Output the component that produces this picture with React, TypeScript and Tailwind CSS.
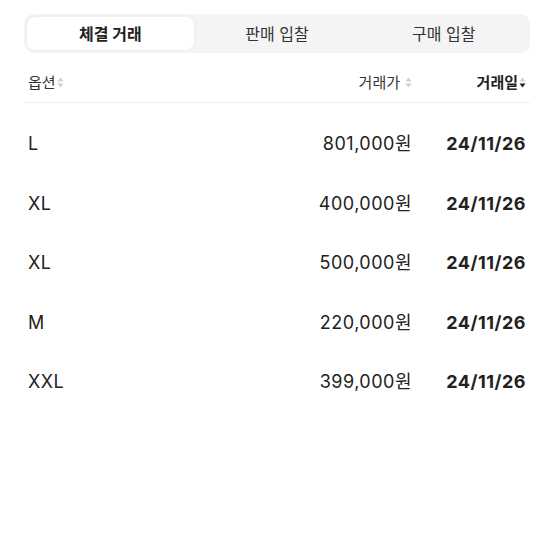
import React, { useState } from 'react';

const TABS = ['체결 거래', '판매 입찰', '구매 입찰'];

const ROWS = [
  { option: 'L', price: '801,000원', date: '24/11/26' },
  { option: 'XL', price: '400,000원', date: '24/11/26' },
  { option: 'XL', price: '500,000원', date: '24/11/26' },
  { option: 'M', price: '220,000원', date: '24/11/26' },
  { option: 'XXL', price: '399,000원', date: '24/11/26' },
];

function SortIcon({ active }: { active?: boolean }) {
  return (
    <svg width="7" height="11" viewBox="0 0 7 11" className="shrink-0">
      <path d="M3.5 0.5 L6.5 4.5 L0.5 4.5 Z" fill="#d0d0d0" />
      <path d="M3.5 10.5 L6.5 6.5 L0.5 6.5 Z" fill={active ? '#222222' : '#d0d0d0'} />
    </svg>
  );
}

export default function App() {
  const [tab, setTab] = useState(0);

  return (
    <div
      className="w-[554px] h-[554px] bg-white px-6 pt-[14px] text-[#222]"
      style={{ fontFamily: 'Inter, "Noto Sans CJK KR", sans-serif' }}
    >
      {/* Tabs */}
      <div className="flex h-[39px] rounded-[10px] bg-[#f4f4f4] p-[3px]">
        {TABS.map((t, i) => (
          <button
            key={t}
            onClick={() => setTab(i)}
            className={
              i === tab
                ? 'flex-1 rounded-[8px] bg-white text-[16px] font-bold text-[#222] shadow-[0_0_3px_rgba(0,0,0,0.06)]'
                : 'flex-1 text-[16px] text-[#333]'
            }
          >
            {t}
          </button>
        ))}
      </div>

      {/* Header */}
      <div className="flex items-end h-[50px] pb-[8px] px-1 border-b border-[#efefef] text-[15px] text-[#333]">
        <div className="flex-1 flex items-center gap-[1px]">
          <span>옵션</span>
          <SortIcon />
        </div>
        <div className="flex items-center gap-[5px]">
          <span>거래가</span>
          <SortIcon />
        </div>
        <div className="w-[114px] flex items-center justify-end gap-[1px]">
          <span className="font-bold text-[#222]">거래일</span>
          <SortIcon active />
        </div>
      </div>

      {/* Rows */}
      <div className="pt-[11px] px-1">
        {ROWS.map((r, i) => (
          <div key={i} className="flex items-center h-[59.5px] text-[18px] tracking-[0.5px]">
            <div className="flex-1">{r.option}</div>
            <div className="text-right">{r.price}</div>
            <div className="w-[114px] text-right font-bold">{r.date}</div>
          </div>
        ))}
      </div>
    </div>
  );
}
